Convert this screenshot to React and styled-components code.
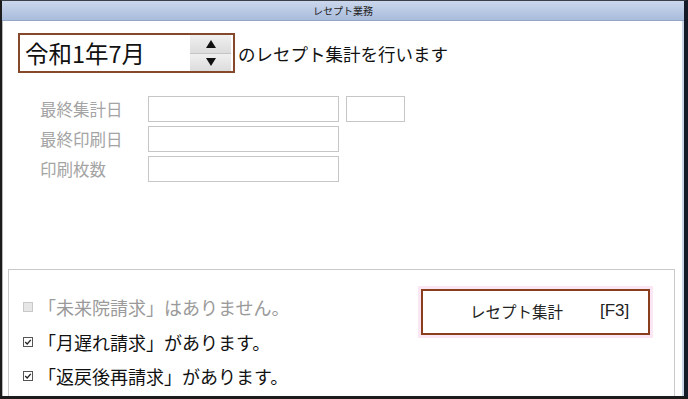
import React from 'react'
import styled, { createGlobalStyle } from 'styled-components'

const GlobalStyle = createGlobalStyle`
  body {
    margin: 0;
    background: #ffffff;
    font-family: "Noto Sans CJK JP", "Noto Sans", sans-serif;
  }
`

const Window = styled.div`
  width: 688px;
  height: 399px;
  box-sizing: border-box;
  display: flex;
  flex-direction: column;
  background: #fff;
  border-top: 1px solid #3a3f48;
  border-left: 2px solid #1b1b1b;
  border-right: 4px solid #141a26;
  border-bottom: 3px solid #1b1b1b;
  box-shadow: inset 1px 0 0 #b8b8b8, inset -2px 0 0 #c9d4e6;
`

const TitleBar = styled.div`
  height: 19px;
  flex-shrink: 0;
  display: flex;
  align-items: center;
  justify-content: center;
  font-size: 10px;
  color: #222;
  background: linear-gradient(#cbd7ec, #a9bcdc);
  border-bottom: 1px solid #93a6c6;
`

const Body = styled.div`
  flex: 1;
  display: flex;
  flex-direction: column;
  min-height: 0;
`

const TopSection = styled.div`
  padding: 12px 16px 0 16px;
`

const PeriodRow = styled.div`
  display: flex;
  align-items: center;
`

const DateBox = styled.div`
  width: 217px;
  height: 40px;
  box-sizing: border-box;
  display: flex;
  border: 2px solid #85482a;
  background: #fff;
`

const DateText = styled.div`
  flex: 1;
  display: flex;
  align-items: center;
  padding: 0 0 1px 5px;
  font-size: 23.5px;
  color: #111;
`

const Spinner = styled.div`
  width: 41px;
  margin: 0 2px 0 0;
  display: flex;
  flex-direction: column;
`

const SpinHalf = styled.div`
  flex: 1;
  display: flex;
  align-items: center;
  justify-content: center;
  background: linear-gradient(#f0f0f0, #dcdcdc);
  border-bottom: ${p => (p.$top ? '1px solid #c4c4c4' : 'none')};
`

const Caption = styled.div`
  margin-left: 3px;
  font-size: 17.5px;
  color: #111;
`

const Fields = styled.div`
  margin-top: 23px;
  padding-left: 22px;
  display: grid;
  grid-template-columns: 101px 191px 59px;
  column-gap: 7px;
  row-gap: 4px;
  align-items: center;
`

const Label = styled.div`
  font-size: 16.5px;
  color: #a4a4a4;
  line-height: 26px;
`

const Input = styled.div`
  height: 26px;
  box-sizing: border-box;
  border: 1px solid #c6c6c6;
  background: #fff;
`

const GroupBox = styled.div`
  margin: 87px 9px 0 6px;
  flex: 1;
  display: flex;
  justify-content: space-between;
  align-items: flex-start;
  border: 1px solid #c9c9c9;
  border-bottom: none;
`

const CheckList = styled.div`
  padding: 20px 0 0 14px;
  display: flex;
  flex-direction: column;
`

const CheckRow = styled.div`
  display: flex;
  align-items: center;
  height: 34.5px;
  font-size: 18px;
  color: ${p => (p.$off ? '#9a9a9a' : '#111')};
`

const Box = styled.span`
  display: inline-flex;
  margin-right: 5px;
`

const ActionButton = styled.div`
  margin: 19px 24px 0 0;
  width: 229px;
  height: 46px;
  box-sizing: border-box;
  display: flex;
  align-items: center;
  padding: 0 0 2px 47px;
  gap: 37px;
  font-size: 15.5px;
  color: #222;
  background: #fff;
  border: 2px solid #8a3e1e;
  box-shadow: 0 0 0 3px #fbe6f4;
`

const Key = styled.span`
  font-family: "Liberation Sans", Arial, sans-serif;
  font-size: 17px;
`

const Arrow = ({ down }) => (
  <svg width="10" height="8" viewBox="0 0 10 8">
    <polygon points={down ? '0,0 10,0 5,8' : '5,0 10,8 0,8'} fill="#111" />
  </svg>
)

const CheckIcon = ({ on }) => (
  <svg width="10" height="10" viewBox="0 0 10 10">
    <rect x="0.5" y="0.5" width="9" height="9" fill={on ? '#fff' : '#e6e6e6'} stroke={on ? '#555' : '#c8c8c8'} />
    {on && <polyline points="2.2,5 4.2,7 7.8,2.8" fill="none" stroke="#222" strokeWidth="1.3" />}
  </svg>
)

const checks = [
  { text: '「未来院請求」はありません。', on: false },
  { text: '「月遅れ請求」があります。', on: true },
  { text: '「返戻後再請求」があります。', on: true },
]

export default function App() {
  return (
    <>
      <GlobalStyle />
      <Window>
        <TitleBar>レセプト業務</TitleBar>
        <Body>
          <TopSection>
            <PeriodRow>
              <DateBox>
                <DateText>令和1年7月</DateText>
                <Spinner>
                  <SpinHalf $top><Arrow /></SpinHalf>
                  <SpinHalf><Arrow down /></SpinHalf>
                </Spinner>
              </DateBox>
              <Caption>のレセプト集計を行います</Caption>
            </PeriodRow>
            <Fields>
              <Label>最終集計日</Label>
              <Input />
              <Input />
              <Label>最終印刷日</Label>
              <Input />
              <span />
              <Label>印刷枚数</Label>
              <Input />
              <span />
            </Fields>
          </TopSection>
          <GroupBox>
            <CheckList>
              {checks.map(c => (
                <CheckRow key={c.text} $off={!c.on}>
                  <Box><CheckIcon on={c.on} /></Box>
                  {c.text}
                </CheckRow>
              ))}
            </CheckList>
            <ActionButton>
              <span>レセプト集計</span>
              <Key>[F3]</Key>
            </ActionButton>
          </GroupBox>
        </Body>
      </Window>
    </>
  )
}
